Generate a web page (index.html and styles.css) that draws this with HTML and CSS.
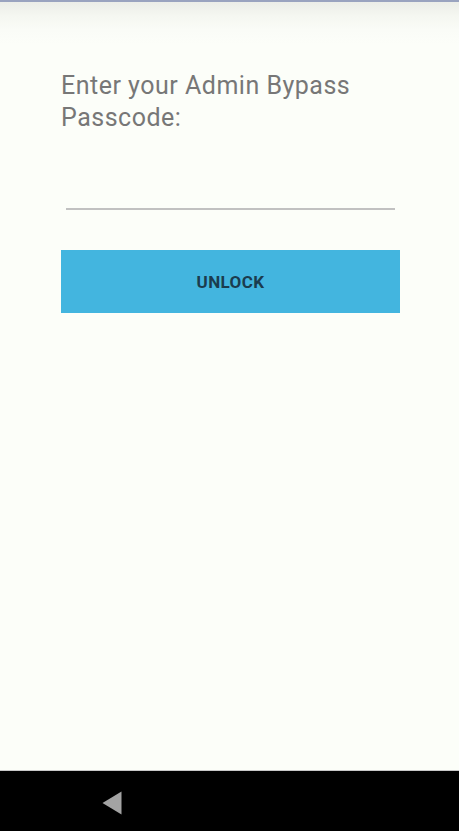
FILE: index.html
```html
<!DOCTYPE html>
<html>
<head>
<meta charset="utf-8">
<link rel="stylesheet" href="styles.css">
</head>
<body>
<div class="screen">
  <main class="content">
    <h1 class="prompt">Enter your Admin Bypass Passcode:</h1>
    <div class="field"></div>
    <button class="unlock">UNLOCK</button>
  </main>
  <nav class="navbar">
    <svg class="back" width="20" height="24" viewBox="0 0 20 24"><path d="M19.5 0.5 L19.5 23.5 L0.5 12 Z" fill="#a3a3a3"/></svg>
  </nav>
</div>
</body>
</html>
```
FILE: styles.css
```css
html, body {
  margin: 0;
  padding: 0;
}
body {
  background: #fcfef9;
  font-family: Roboto, "Noto Sans", sans-serif;
}
.screen {
  height: 831px;
  display: flex;
  flex-direction: column;
  border-top: 2px solid #9aa3bf;
  box-sizing: border-box;
  background: linear-gradient(to bottom, #ecede8 0px, #f5f7f1 14px, #fafcf7 28px, #fcfef9 42px);
}
.content {
  flex: 1;
  padding: 68px 40px 0 61px;
  display: flex;
  flex-direction: column;
}
.prompt {
  margin: 0;
  font-size: 25px;
  line-height: 32px;
  font-weight: 400;
  color: #777777;
  letter-spacing: 0.5px;
  max-width: 330px;
}
.field {
  margin: 74px 24px 0 5px;
  height: 2px;
  background: #c1c1c1;
}
.unlock {
  margin-top: 40px;
  margin-right: 19px;
  height: 63px;
  border: none;
  background: #43b5df;
  color: #1b3c4e;
  font-family: Roboto, sans-serif;
  font-weight: 700;
  font-size: 17px;
  letter-spacing: 0.4px;
  padding: 0;
}
.navbar {
  height: 60px;
  background: #000;
  border-top: 1px solid #c8c8c8;
  display: flex;
  align-items: center;
  padding-left: 102px;
}
.back {
  display: block;
  margin-top: 3px;
}
```
